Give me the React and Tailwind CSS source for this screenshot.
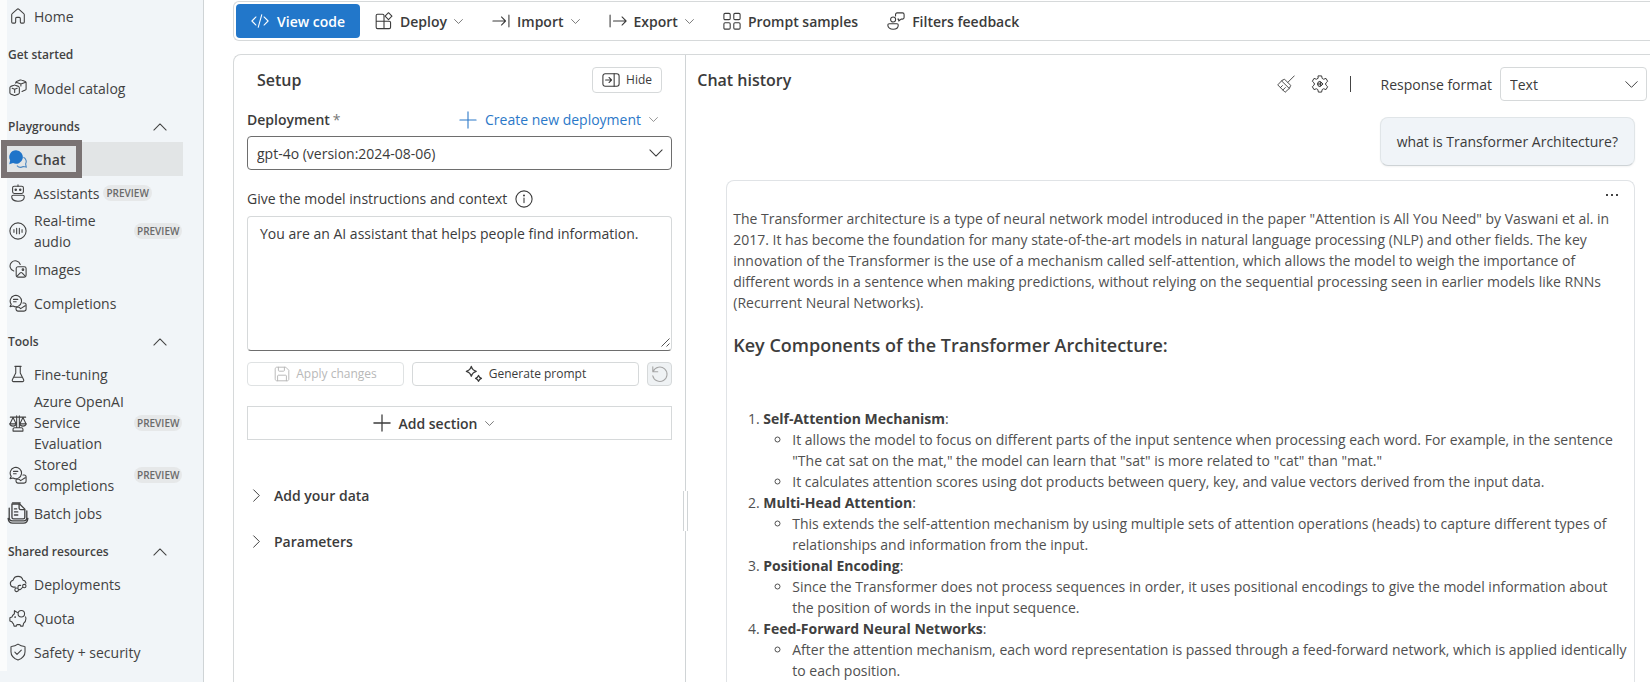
import React from "react";

const PATHS = {
  home: <path d="M3 8.600c0-.5.2-.9.6-1.200l5.300-4.800c.6-.5 1.600-.5 2.200 0l5.300 4.800c.4.300.6.700.6 1.200v8.100c0 .7-.5 1.200-1.200 1.200h-2c-.7 0-1.200-.5-1.200-1.200v-4c0-.7-.5-1.200-1.200-1.200H8.600c-.7 0-1.200.5-1.200 1.200v4c0 .7-.5 1.200-1.200 1.200h-2c-.7 0-1.200-.5-1.200-1.200z" />,
  catalog: (
    <>
      <path d="M1 9.700c0-.7.3-1.200 1-1.500l3.500-1.300c.5-.2 1-.2 1.500 0l3.500 1.300c.7.3 1 .8 1 1.500v5.600c0 .7-.3 1.200-1 1.500L7 18.100c-.5.2-1 .2-1.500 0L2 16.800c-.7-.3-1-.8-1-1.500z" />
      <path d="M3.500 10.300l2.800 1.100 2.800-1.100M6.300 11.400v3.600" />
      <path d="M7.500 4.700V4c0-.6.3-1 .9-1.300l4-1.500c.5-.2 1-.2 1.500 0l4.200 1.500c.6.3.9.700.9 1.300v7c0 .6-.3 1-.9 1.300l-3.600 1.500M8 3.500l5.200 2L18.500 3.500M13.200 5.500v2.200" />
    </>
  ),
  bot: (
    <>
      <rect x="4" y="2.500" width="12" height="8" rx="1.800" />
      <path d="M10 2.500V.8M4.800 12.500h10.400c1 0 1.800.8 1.800 1.800 0 2.900-2.900 4.900-7 4.900s-7-2-7-4.900c0-1 .8-1.800 1.800-1.800z" />
      <circle cx="7.500" cy="6.500" r=".8" fill="currentColor" />
      <circle cx="12.500" cy="6.500" r=".8" fill="currentColor" />
    </>
  ),
  audio: (
    <>
      <circle cx="10" cy="10" r="9" />
      <path d="M5.500 8.500v3M8.500 7v6M11.500 7v6M14.500 8.500v3" />
    </>
  ),
  images: (
    <>
      <path d="M5.300 12.300A5.800 5.800 0 1 1 12.500 5" />
      <rect x="8" y="7.500" width="11" height="11.500" rx="2" />
      <path d="M9 18l3.500-3.600c.5-.5 1.500-.5 2 0L18 18" />
      <circle cx="15.500" cy="10.800" r=".9" />
    </>
  ),
  completions: (
    <>
      <path d="M2.500 11.500l-1.300 2.500 3.300-.7a6.300 6.300 0 1 0-2-1.800z" />
      <path d="M5 6h4.800M5 8.700h3" />
      <path d="M15.500 10h1.300c1.200 0 2.200.9 2.200 2.200v4.600c0 1.200-1 2.200-2.200 2.200H10c-1.200 0-2.200-1-2.200-2.200v-1.200c0-.4.3-.8.800-.8h2.800l1.500 1.500 5-3.300" />
    </>
  ),
  flask: <path d="M6.500 1.500h7M7.500 1.500v7.500L3.700 16.500c-.4.900.2 2 1.300 2h10c1.100 0 1.700-1.100 1.300-2L12.500 9V1.500M5.300 13.700h9.400" />,
  scale: (
    <>
      <path d="M1.500 3.500h17M8.500 2v13M11.500 2v13M4.500 3.800L1 11h7zM15.500 3.800L12 11h7z" />
      <path d="M1 11c.3 1.600 1.700 2.500 3.500 2.500S7.700 12.600 8 11M12 11c.3 1.600 1.700 2.500 3.500 2.500s3.200-.9 3.500-2.500M4.500 19v-2c0-1.100.7-1.800 1.800-1.800h7.400c1.100 0 1.800.7 1.800 1.800v2z" />
    </>
  ),
  batch: (
    <>
      <path d="M4.500 1.800h7l4.700 4.700v7.300c0 .9-.6 1.500-1.500 1.500H6c-.9 0-1.500-.6-1.500-1.500z" />
      <path d="M11 2v3.500c0 .9.6 1.500 1.500 1.500H16M6.800 6.300h2M6.800 9h3M6.800 11.800h3M5 .8h7" />
      <path d="M2 5.500v8.700c0 1.900 1.300 3 3 3h10.200c1.700 0 2.800-1.100 2.800-3V8M1 15c.3 2.600 2 4.200 4.200 4.200h9.800c2.200 0 3.700-1.600 4-4.200" />
    </>
  ),
  cloud: (
    <>
      <path d="M7 13.500H5a3.900 3.900 0 0 1-.4-7.700 5.600 5.600 0 0 1 10.900 0 3.700 3.700 0 0 1 3.300 3.400M13 11.500h-1.500c-1.100 0-1.500.7-1.500 1.500v1" />
      <circle cx="8.500" cy="16.500" r="2" />
      <circle cx="17" cy="12.300" r="1.900" />
      <path d="M10.500 16.500c2.700 0 3.500-1 4.700-2.900" />
    </>
  ),
  pig: (
    <>
      <path d="M9.500 3.800C8.600 3.500 7 3 6 1.800v3.500C4.500 6.500 3.600 7.500 3.200 9L1 9.800v3.500l2.200.8c.5 1.200 1.100 1.900 1.800 2.500l.6 2.400h2.600l.6-1.600h3.500l.6 1.600H15.500l.7-3c1.700-1.400 2.600-3 2.600-5.200 0-.8-.1-1.400-.4-2" />
      <circle cx="13.700" cy="5.300" r="3.600" />
      <circle cx="6.800" cy="9" r=".4" fill="currentColor" />
    </>
  ),
  shield: (
    <>
      <path d="M10 1.200c2.200 1.600 4.700 2.500 7.300 2.700.3 0 .5.200.5.500v5.200c0 4.200-2.600 7.300-7.800 9.200-5.200-1.900-7.800-5-7.800-9.200V4.400c0-.3.200-.5.500-.5C5.300 3.700 7.800 2.800 10 1.200z" />
      <path d="M6.500 10.200l2.400 2.400 4.800-4.800" />
    </>
  ),
  code: <path d="M5.500 5.500L1 10l4.500 4.500M14.500 5.500L19 10l-4.500 4.500M12 3l-4 14" />,
  deploy: (
    <>
      <path d="M10 10.200V4c0-.9-.6-1.500-1.500-1.500H2.800c-.9 0-1.500.7-1.500 1.500v13c0 .8.600 1.500 1.500 1.500h13c.9 0 1.500-.7 1.500-1.500v-5.300c0-.9-.6-1.500-1.500-1.500zM1.300 10.200H10v8.300" />
      <path d="M15 .8l3.800 3.800L15 8.400l-3.800-3.800z" />
    </>
  ),
  importIcon: <path d="M1 10h14M10.500 5.500L15 10l-4.500 4.500M18.800 3.500v13" />,
  exportIcon: <path d="M1.200 3.500v13M5 10h14M14.500 5.500L19 10l-4.500 4.500" />,
  grid: (
    <>
      <rect x="1" y="1.500" width="7" height="7" rx="1.300" />
      <rect x="12" y="1.500" width="7" height="7" rx="1.300" />
      <rect x="1" y="12" width="7" height="7" rx="1.300" />
      <rect x="12" y="12" width="7" height="7" rx="1.300" />
    </>
  ),
  feedback: (
    <>
      <circle cx="6.800" cy="8.300" r="2.800" />
      <path d="M2.500 13h8.600c.8 0 1.400.6 1.400 1.400 0 2.800-2.400 4.800-5.700 4.800s-5.900-2-5.900-4.800c0-.8.7-1.400 1.600-1.400zM9.500 4.500V2.700c0-1 .7-1.700 1.700-1.700h6c1 0 1.800.7 1.800 1.700v3.500c0 1-.8 1.700-1.800 1.700h-1.500L13 10V7.900h-1" />
    </>
  ),
  hide: (
    <>
      <rect x="1" y="3" width="18" height="14" rx="2.500" />
      <path d="M13.500 3v14M4 10h6.500M7.800 7.200l2.800 2.800-2.800 2.800" />
    </>
  ),
  plus: <path d="M10 1v18M1 10h18" />,
  info: (
    <>
      <circle cx="10" cy="10" r="9" />
      <path d="M10 9v5" />
      <circle cx="10" cy="6.200" r=".5" fill="currentColor" />
    </>
  ),
  save: (
    <>
      <path d="M1.500 3.500c0-1.100.9-2 2-2h11.200l3.800 3.800v11.200c0 1.100-.9 2-2 2h-13c-1.100 0-2-.9-2-2z" />
      <path d="M5.500 1.500v4c0 .6.4 1 1 1H12c.6 0 1-.4 1-1v-4M4.500 18.500v-6c0-.6.4-1 1-1h9c.6 0 1 .4 1 1v6" />
    </>
  ),
  sparkle: (
    <>
      <path d="M7 1.500c.8 2.900 2.600 4.700 5.500 5.500C9.600 7.800 7.800 9.600 7 12.500 6.200 9.600 4.400 7.800 1.500 7 4.400 6.200 6.200 4.400 7 1.500z" />
      <path d="M15 11.500c.5 1.800 1.500 2.800 3.300 3.300-1.800.5-2.800 1.500-3.300 3.300-.5-1.800-1.500-2.800-3.300-3.300 1.800-.5 2.800-1.500 3.300-3.300z" />
    </>
  ),
  undo: <path d="M2 2v5.500h5.500M2.500 7a8 8 0 1 1-.5 5" />,
  broom: <path d="M19.200 1l-7 7M8.700 5l6.500 6.500-1.300 3.200L9 19.200 .8 11l4.500-4.700zM5 6.500l8.700 8.500M3.800 14l2.200-2.200M6.500 16.700l2.700-2.700" />,
  gear: (
    <>
      <path d="M8.200 1h3.600l.6 2.800 1.600.9 2.700-.9 1.800 3.200-2.100 1.900v2.200l2.100 1.900-1.800 3.200-2.700-.9-1.600.9-.6 2.800H8.200l-.6-2.800-1.600-.9-2.700.9L1.500 13l2.100-1.900V8.900L1.500 7l1.800-3.200 2.700.9 1.600-.9z" />
      <path d="M9.500 7a3.100 3.100 0 0 0 0 6M8 10h3M10.800 7.500l2.600 2.500-2.600 2.500z" fill="currentColor" fillOpacity=".3" />
    </>
  ),
};

function Icon({ name, className = "size-[18px]", weight = 1.2 }) {
  return (
    <svg viewBox="0 0 20 20" className={`shrink-0 ${className}`} fill="none" stroke="currentColor" strokeWidth={weight} strokeLinecap="round" strokeLinejoin="round" aria-hidden="true">
      {PATHS[name]}
    </svg>
  );
}

function ChatIcon() {
  return (
    <svg viewBox="0 0 20 20" className="size-[18px] shrink-0" aria-hidden="true">
      <path d="M16 8a5.300 5.300 0 0 1 2.400 7.500l.8 3.500-3.400-.7a5.600 5.600 0 0 1-7-1" fill="none" stroke="#4a86c0" strokeWidth="1.200" />
      <path d="M8 .3a7.500 7.500 0 1 1-3.500 14.200L.3 15.700l1-4.200A7.500 7.500 0 0 1 8 .3z" fill="#1f74c9" />
    </svg>
  );
}

function Chevron({ className }) {
  return (
    <svg viewBox="0 0 16 16" className={`shrink-0 ${className}`} fill="none" stroke="currentColor" strokeWidth="1.200" strokeLinecap="round" strokeLinejoin="round" aria-hidden="true">
      <path d="M1 4.500L8 11.500l7-7" />
    </svg>
  );
}

function Badge() {
  return <span className="rounded-full bg-[#e6e8e9] px-[3px] text-[10px] leading-4 font-semibold text-[#6a6a6a]">PREVIEW</span>;
}

function NavItem({ icon, label, lines = "h-[34px]", badge, inline, active, iconClass }) {
  return (
    <li>
      <a href="#" className={`flex items-center pl-0.5 ${lines} ${active ? "bg-[#e2e5e6] font-semibold" : ""}`}>
        {active ? <ChatIcon /> : <Icon name={icon} className={iconClass} />}
        <span className={`ml-[7px] leading-[21px] whitespace-nowrap ${inline ? "" : "w-[99px]"}`}>{label}</span>
        {badge && <span className={`flex ${inline ? "ml-1" : "ml-px"}`}><Badge /></span>}
      </a>
    </li>
  );
}

function NavHeading({ children, collapsible = true }) {
  if (!collapsible) return <h2 className="flex h-[39px] items-center pt-[6px] pl-px text-[12px] font-semibold">{children}</h2>;
  return (
    <h2>
      <button type="button" className="flex h-[37px] w-full items-center justify-between pt-[6px] pr-4 pl-px text-[12px] font-semibold">
        {children}
        <Chevron className="size-[14px] rotate-180" />
      </button>
    </h2>
  );
}

function Sidebar() {
  return (
    <aside className="w-[204px] shrink-0 border-r border-[#cfd4d6] bg-[#f1f5f8]">
      <nav className="w-[183px] border-l-[7px] border-[#fbfcfc] pb-0.5 text-[#424242]">
        <ul>
          <NavItem icon="home" label="Home" lines="h-8" />
        </ul>
        <NavHeading collapsible={false}>Get started</NavHeading>
        <ul>
          <NavItem icon="catalog" label="Model catalog" />
        </ul>
        <NavHeading>Playgrounds</NavHeading>
        <ul>
          <li className="relative">
            <ul><NavItem label="Chat" active /></ul>
            <span className="pointer-events-none absolute -top-0.5 -left-[6px] h-[38px] w-[81px] border-6 border-[#7a7373]" />
          </li>
          <NavItem icon="bot" label="Assistants" badge inline />
          <NavItem icon="audio" label={<>Real-time<br />audio</>} lines="" badge />
          <NavItem icon="images" label="Images" />
          <NavItem icon="completions" label="Completions" />
        </ul>
        <NavHeading>Tools</NavHeading>
        <ul>
          <NavItem icon="flask" label="Fine-tuning" />
          <NavItem icon="scale" label={<>Azure OpenAI<br />Service<br />Evaluation</>} lines="" badge />
          <NavItem icon="completions" label={<>Stored<br />completions</>} lines="" badge />
          <NavItem icon="batch" label="Batch jobs" iconClass="-mx-0.5 size-[22px]" />
        </ul>
        <NavHeading>Shared resources</NavHeading>
        <ul>
          <NavItem icon="cloud" label="Deployments" />
          <NavItem icon="pig" label="Quota" />
          <NavItem icon="shield" label="Safety + security" />
        </ul>
      </nav>
    </aside>
  );
}

function ToolButton({ icon, children, menu }) {
  return (
    <button type="button" className="flex items-center gap-[7px] font-semibold whitespace-nowrap">
      <Icon name={icon} />
      {children}
      {menu && <Chevron className="size-[9px]" />}
    </button>
  );
}

function Toolbar() {
  return (
    <div role="toolbar" className="mt-px flex h-10 items-center rounded-l-md border border-r-0 border-[#d6d9da] pl-[2px]">
      <button type="button" className="flex h-[34px] items-center gap-2 rounded bg-[#2277ca] px-[15px] font-semibold text-white">
        <Icon name="code" />
        View code
      </button>
      <div className="ml-[15px] flex gap-[29px]">
        <ToolButton icon="deploy" menu>Deploy</ToolButton>
        <ToolButton icon="importIcon" menu>Import</ToolButton>
        <ToolButton icon="exportIcon" menu>Export</ToolButton>
        <ToolButton icon="grid">Prompt samples</ToolButton>
        <ToolButton icon="feedback">Filters feedback</ToolButton>
      </div>
    </div>
  );
}

function Setup() {
  return (
    <section className="w-[451px] shrink-0 px-[13px]">
      <div className="flex items-center justify-between pt-3 pr-[10px] pl-[10px]">
        <h1 className="text-base leading-[26px] font-semibold">Setup</h1>
        <button type="button" className="flex h-[26px] items-center gap-[6px] rounded border border-[#d6d9da] px-[9px] text-[12px]">
          <Icon name="hide" />
          Hide
        </button>
      </div>
      <div className="mt-4 flex items-center justify-between pr-[14px]">
        <label htmlFor="deployment" className="flex gap-[3px] leading-[21px] font-semibold">
          Deployment<span className="font-normal text-[#777]">*</span>
        </label>
        <button type="button" className="flex items-center gap-2 leading-[21px] text-[#2b78c8]">
          <Icon name="plus" />
          Create new deployment
          <Chevron className="size-[9px] text-[#616161]" />
        </button>
      </div>
      <div className="mt-[6px] grid items-center">
        <select id="deployment" className="col-start-1 row-start-1 h-[34px] w-full appearance-none rounded-sm border border-[#6e6e6e] bg-white px-[9px]">
          <option>gpt-4o (version:2024-08-06)</option>
        </select>
        <Chevron className="pointer-events-none col-start-1 row-start-1 mr-[9px] size-[14px] justify-self-end" />
      </div>
      <div className="mt-[18px] flex items-center gap-2 leading-[21px]">
        <label htmlFor="instructions">Give the model instructions and context</label>
        <button type="button" aria-label="About instructions"><Icon name="info" /></button>
      </div>
      <div className="mt-[7px] grid">
        <textarea id="instructions" className="col-start-1 row-start-1 h-[135px] w-full resize-none rounded border border-[#d6d9da] border-b-[#6e6e6e] px-3 py-[6px] leading-[21px]" defaultValue="You are an AI assistant that helps people find information." />
        <svg viewBox="0 0 9 9" className="pointer-events-none col-start-1 row-start-1 mr-0.5 mb-1 size-[9px] self-end justify-self-end" stroke="#555" aria-hidden="true">
          <path d="M0.500 8.500l8-8M5.500 8.500l3-3" />
        </svg>
      </div>
      <div className="mt-[11px] flex h-6 gap-2 text-[12px]">
        <button type="button" disabled className="flex w-[157px] items-center justify-center gap-[6px] rounded border border-[#dfe2e3] text-[#b8b8b8]">
          <Icon name="save" className="size-4" />
          Apply changes
        </button>
        <button type="button" className="flex grow items-center justify-center gap-[6px] rounded border border-[#d6d9da]">
          <Icon name="sparkle" weight={1.4} />
          Generate prompt
        </button>
        <button type="button" disabled aria-label="Undo" className="flex w-[25px] items-center justify-center rounded border border-[#d6d9da] bg-[#eff2f4] text-[#a5a5a5]">
          <Icon name="undo" />
        </button>
      </div>
      <button type="button" className="mt-5 flex h-[34px] w-full items-center justify-center gap-[7px] border border-[#d6d9da] pr-[52px] font-semibold">
        <Icon name="plus" weight={1.4} />
        Add section
        <Chevron className="size-[9px]" />
      </button>
      <div className="mt-8 pl-[3px]">
        {["Add your data", "Parameters"].map((t) => (
          <button key={t} type="button" className="flex h-[46px] w-full items-center gap-[11px] font-semibold">
            <Chevron className="size-[13px] -rotate-90" />
            {t}
          </button>
        ))}
      </div>
    </section>
  );
}

const COMPONENTS = [
  ["Self-Attention Mechanism", [
    'It allows the model to focus on different parts of the input sentence when processing each word. For example, in the sentence "The cat sat on the mat," the model can learn that "sat" is more related to "cat" than "mat."',
    "It calculates attention scores using dot products between query, key, and value vectors derived from the input data.",
  ]],
  ["Multi-Head Attention", ["This extends the self-attention mechanism by using multiple sets of attention operations (heads) to capture different types of relationships and information from the input."]],
  ["Positional Encoding", ["Since the Transformer does not process sequences in order, it uses positional encodings to give the model information about the position of words in the input sequence."]],
  ["Feed-Forward Neural Networks", ["After the attention mechanism, each word representation is passed through a feed-forward network, which is applied identically to each position."]],
];

function ChatHistory() {
  return (
    <section className="flex min-w-0 grow flex-col pl-3">
      <div className="flex items-start justify-between pt-3 pr-[3px]">
        <h1 className="text-base leading-[26px] font-semibold">Chat history</h1>
        <div className="flex items-center">
          <button type="button" aria-label="Clear chat"><Icon name="broom" weight={1} /></button>
          <button type="button" aria-label="Chat settings" className="ml-4"><Icon name="gear" weight={1.1} /></button>
          <span className="ml-[21px] h-4 w-px bg-[#444]" />
          <label htmlFor="format" className="mr-2 ml-[29px]">Response format</label>
          <div className="grid items-center">
            <select id="format" className="col-start-1 row-start-1 h-[34px] w-[147px] appearance-none rounded-sm border border-[#d6d9da] bg-white px-[9px]">
              <option>Text</option>
            </select>
            <Chevron className="pointer-events-none col-start-1 row-start-1 mr-[9px] size-[13px] justify-self-end" />
          </div>
        </div>
      </div>
      <div className="flex grow flex-col pt-4 pr-[15px] pl-[29px]">
        <p className="self-end rounded-lg border border-[#e0e5e8] border-b-[#ced3d6] bg-[#f0f4f8] px-4 py-[13px] leading-[21px] shadow-xs">what is Transformer Architecture?</p>
        <article className="mt-[14px] grow rounded-t-lg border border-b-0 border-[#e0e3e6] pr-[6px] pl-[6px] text-[#505050]">
          <div className="flex h-[27px] items-center justify-end pr-[10px]">
            <button type="button" aria-label="More options">
              <svg viewBox="0 0 12 2" className="h-0.5 w-3" fill="#444" aria-hidden="true">
                <rect width="2" height="2" /><rect x="5" width="2" height="2" /><rect x="10" width="2" height="2" />
              </svg>
            </button>
          </div>
          <p className="leading-[21px]">
            The Transformer architecture is a type of neural network model introduced in the paper "Attention is All You Need" by Vaswani et al. in 2017. It has become the foundation for many state-of-the-art models in natural language processing (NLP) and other fields. The key innovation of the Transformer is the use of a mechanism called self-attention, which allows the model to weigh the importance of different words in a sentence when making predictions, without relying on the sequential processing seen in earlier models like RNNs (Recurrent Neural Networks).
          </p>
          <h2 className="mt-5 text-[18px] leading-6 font-semibold text-[#3d3d3d]">Key Components of the Transformer Architecture:</h2>
          <ol className="mt-[51px] list-decimal pl-[30px] leading-[21px]">
            {COMPONENTS.map(([title, points]) => (
              <li key={title}>
                <strong className="font-bold text-[#404040]">{title}</strong>:
                <ul className="list-[circle] pl-[29px]">
                  {points.map((p) => <li key={p}>{p}</li>)}
                </ul>
              </li>
            ))}
          </ol>
        </article>
      </div>
    </section>
  );
}

export default function App() {
  return (
    <div className="flex min-h-screen bg-white font-['Open_Sans',sans-serif] text-[14px] text-[#3b3b3b]">
      <Sidebar />
      <main className="flex min-w-0 grow flex-col pl-[29px]">
        <Toolbar />
        <div className="mt-[13px] flex grow rounded-tl-lg border-t border-l border-[#d6d9da]">
          <Setup />
          <div role="separator" aria-orientation="vertical" className="relative w-px bg-[#d0d4d6]">
            <span className="absolute top-[436px] -left-0.5 h-10 w-[5px] border-x border-[#d0d4d6] bg-white" />
          </div>
          <ChatHistory />
        </div>
      </main>
    </div>
  );
}
